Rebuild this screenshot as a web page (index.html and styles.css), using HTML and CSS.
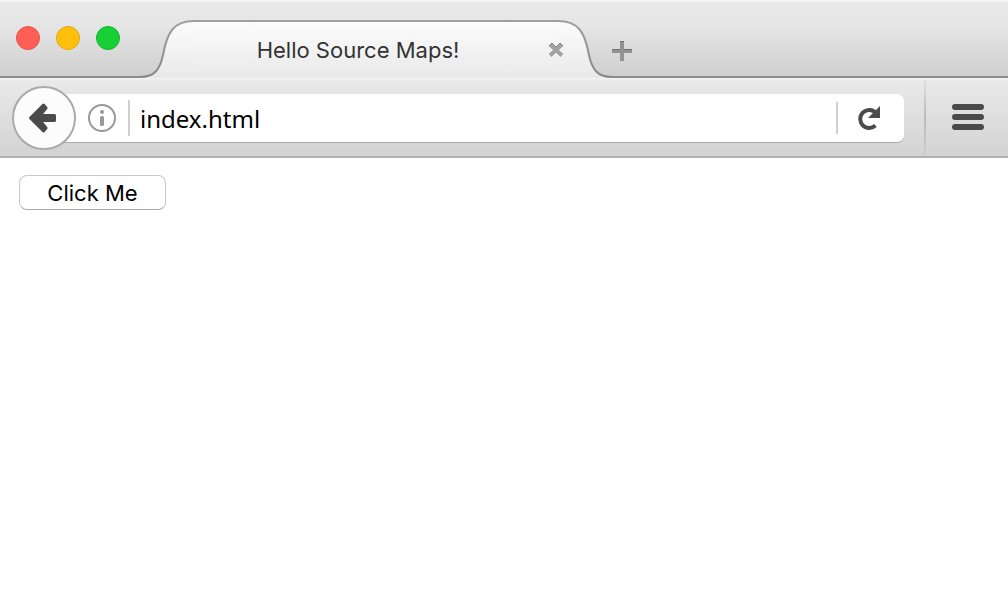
FILE: index.html
```html
<!DOCTYPE html>
<html lang="en">
<head>
<meta charset="utf-8">
<title>Hello Source Maps!</title>
<link rel="stylesheet" href="styles.css">
</head>
<body>
<header class="browser">
  <div class="tab-strip">
    <div class="window-controls">
      <button class="light light-close" aria-label="Close window"></button>
      <button class="light light-minimize" aria-label="Minimize window"></button>
      <button class="light light-zoom" aria-label="Zoom window"></button>
    </div>
    <div class="tab">
      <svg class="curve curve-left" viewBox="0 0 56 58" aria-hidden="true">
        <defs>
          <linearGradient id="tab-fill" gradientUnits="userSpaceOnUse" x1="0" y1="0" x2="0" y2="58"><stop offset="0" stop-color="#fcfcfc"/><stop offset="1" stop-color="#e9e9e9"/></linearGradient>
          <linearGradient id="tab-edge" gradientUnits="userSpaceOnUse" x1="0" y1="0" x2="0" y2="58"><stop offset="0" stop-color="#a0a0a0"/><stop offset="1" stop-color="#888888"/></linearGradient>
        </defs>
        <path d="M0 57C15 57 20 49 23 35C27 13 33 1 54 1H56V58H0Z" fill="url(#tab-fill)"/>
        <path d="M0 57C15 57 20 49 23 35C27 13 33 1 54 1H56" fill="none" stroke="url(#tab-edge)" stroke-width="2"/>
      </svg>
      <div class="tab-middle"></div>
      <svg class="curve curve-right" viewBox="0 0 56 58" aria-hidden="true">
        <path d="M56 57C41 57 36 49 33 35C29 13 23 1 2 1H0V58H56Z" fill="url(#tab-fill)"/>
        <path d="M56 57C41 57 36 49 33 35C29 13 23 1 2 1H0" fill="none" stroke="url(#tab-edge)" stroke-width="2"/>
      </svg>
      <div class="tab-content">
        <span class="tab-title">Hello Source Maps!</span>
        <button class="icon-button" aria-label="Close tab">
          <svg width="16" height="16" viewBox="0 0 16 16"><path d="M2 2.5L14 13.5M14 2.5L2 13.5" stroke="#a2a2a2" stroke-width="4"/><path d="M1 4L4 1L8 5L12 1L15 4" fill="none" stroke="#858585"/></svg>
        </button>
      </div>
    </div>
    <button class="icon-button new-tab" aria-label="New tab">
      <svg width="20" height="20" viewBox="0 0 20 20"><path d="M10 0V20M0 10H20" stroke="#929292" stroke-width="4"/><path d="M0 8.5H8M12 8.5H20M8 .5H12" stroke="#707070"/></svg>
    </button>
  </div>
  <nav class="toolbar">
    <button class="back" aria-label="Back">
      <svg width="32" height="32" viewBox="0 0 32 32"><path d="M2.5 16L15.5 3L18 6L12 13.5H26.500V18.500H12L18 26L15.5 29Z" fill="#4b4b4b" stroke="#4b4b4b" stroke-width="3" stroke-linejoin="round"/></svg>
    </button>
    <div class="address-bar">
      <button class="icon-button" aria-label="Site information">
        <svg width="28" height="28" viewBox="0 0 28 28"><circle cx="14" cy="14" r="13" fill="none" stroke="#999" stroke-width="2"/><circle cx="14" cy="8" r="2" fill="#999"/><rect x="12" y="12" width="4" height="10" rx="1.5" fill="#999"/></svg>
      </button>
      <span class="divider divider-info"></span>
      <input class="address" type="text" value="index.html" aria-label="Address">
      <span class="divider divider-reload"></span>
      <button class="icon-button reload" aria-label="Reload">
        <svg width="24" height="24" viewBox="0 0 24 24"><path d="M18.4 19.500A9 9 0 1 1 19 7" fill="none" stroke="#4b4b4b" stroke-width="4"/><path d="M23 0V12H11Z" fill="#4b4b4b"/></svg>
      </button>
    </div>
    <button class="menu" aria-label="Open menu">
      <svg width="32" height="26" viewBox="0 0 32 26"><path d="M3 3H29M3 13H29M3 23H29" stroke="#4b4b4b" stroke-width="6" stroke-linecap="round"/></svg>
    </button>
  </nav>
</header>
<main class="page">
  <button class="click-me">Click Me</button>
</main>
</body>
</html>
```
FILE: styles.css
```css
* { box-sizing: border-box; }

body {
  margin: 0;
  background: #fff;
  font-family: Inter, "Liberation Sans", sans-serif;
  font-size: 22px;
}

button {
  padding: 0;
  font: inherit;
}

svg { display: block; }

.tab-strip {
  display: flex;
  height: 78px;
  background:
    linear-gradient(#8b8b8b, #8b8b8b) bottom / 100% 2px no-repeat,
    linear-gradient(#f8f8f8, #e9e9e9 3px, #e6e6e6 24px, #cecece);
}

.window-controls {
  display: flex;
  gap: 16px;
  padding: 26px 20px 0 16px;
}

.light {
  width: 24px;
  height: 24px;
  border: 1px solid;
  border-radius: 50%;
}

.light-close { background: #ff5f55; border-color: #e8534a; }
.light-minimize { background: #ffbf0a; border-color: #e5a516; }
.light-zoom { background: #17d035; border-color: #12b52b; }

.tab {
  display: grid;
  grid-template-columns: 56px 1fr 56px;
  flex: 0 1 472px;
  height: 58px;
  margin-top: 20px;
}

.curve {
  grid-row: 1;
  width: 56px;
  height: 58px;
}

.curve-left { grid-column: 1; }
.curve-right { grid-column: 3; }

.tab-middle {
  grid-area: 1 / 2;
  border-top: 2px solid #a0a0a0;
  background: linear-gradient(#fcfcfc, #e9e9e9);
}

.tab-content {
  grid-area: 1 / 1 / 2 / 4;
  z-index: 1;
  display: flex;
  align-items: center;
  padding: 2px 48px 0 28px;
}

.tab-title {
  flex: 1;
  color: #333;
  text-align: center;
  white-space: nowrap;
}

.icon-button {
  flex: none;
  border: 0;
  background: none;
}

.new-tab { padding: 24px 0 0; }

.toolbar {
  display: flex;
  align-items: center;
  height: 80px;
  padding: 2px 0 0 12px;
  border-bottom: 2px solid #b2b2b2;
  background: linear-gradient(#f5f5f5, #e9e9e9 3px, #d3d3d3);
}

.back {
  z-index: 1;
  display: grid;
  flex: none;
  place-items: center;
  width: 64px;
  height: 64px;
  border: 2px solid #aaa;
  border-radius: 50%;
  background: #fcfcfc;
}

.address-bar {
  display: flex;
  flex: 1;
  align-items: center;
  min-width: 0;
  height: 49px;
  margin-left: -32px;
  padding: 0 23px 0 44px;
  border-bottom: 1px solid #aaa;
  border-radius: 0 7px 7px 0;
  background: #fff;
}

.divider {
  flex: none;
  width: 2px;
  background: #cecece;
}

.divider-info {
  height: 36px;
  margin: 0 10px 0 12px;
}

.divider-reload { height: 32px; }

.address {
  flex: 1;
  min-width: 0;
  padding: 2px 0 0;
  border: 0;
  outline: 0;
  background: none;
  color: #000;
  font: 24px "Noto Sans", sans-serif;
}

.reload { margin-left: 19px; }

.menu {
  display: grid;
  flex: none;
  place-items: center;
  align-self: stretch;
  width: 84px;
  margin-left: 20px;
  padding: 0 0 2px 4px;
  border: 0;
  background:
    linear-gradient(#e0e0e0, #b8b8b8 50%, #cecece) 0 0 / 2px 100% no-repeat;
}

.page { padding: 17px 19px; }

.click-me {
  display: block;
  width: 147px;
  height: 35px;
  border: 1px solid #c8c8c8;
  border-bottom-color: #aaa;
  border-radius: 8px;
  background: #fff;
  color: #000;
}
```
